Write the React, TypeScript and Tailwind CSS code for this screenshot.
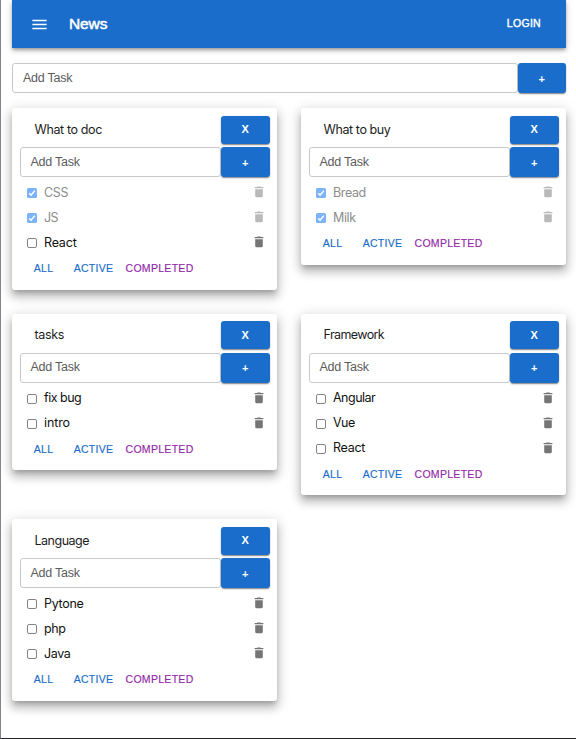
import React from "react";

type Task = { title: string; done?: boolean; w: string };
type List = { title: string; tracking: string; tasks: Task[] };

const lists: List[] = [
  {
    title: "What to doc",
    tracking: "tracking-[-0.38px]",
    tasks: [
      { title: "CSS", done: true, w: "tracking-[-0.3px]" },
      { title: "JS", done: true, w: "tracking-[-0.7px]" },
      { title: "React", w: "tracking-[-0.2px]" },
    ],
  },
  {
    title: "What to buy",
    tracking: "tracking-[-0.4px]",
    tasks: [
      { title: "Bread", done: true, w: "tracking-[-0.4px]" },
      { title: "Milk", done: true, w: "tracking-[-0.35px]" },
    ],
  },
  {
    title: "tasks",
    tracking: "tracking-[-0.35px]",
    tasks: [
      { title: "fix bug", w: "tracking-[-0.5px]" },
      { title: "intro", w: "tracking-[-0.1px]" },
    ],
  },
  {
    title: "Framework",
    tracking: "tracking-[-0.6px]",
    tasks: [
      { title: "Angular", w: "tracking-[-0.5px]" },
      { title: "Vue", w: "tracking-[-0.5px]" },
      { title: "React", w: "tracking-[-0.3px]" },
    ],
  },
  {
    title: "Language",
    tracking: "tracking-[-0.5px]",
    tasks: [
      { title: "Pytone", w: "tracking-[-0.3px]" },
      { title: "php", w: "tracking-[-0.4px]" },
      { title: "Java", w: "tracking-[-0.4px]" },
    ],
  },
];

const raised =
  "bg-[#1a6dca] rounded-[3px] text-white font-bold shadow-[0_2px_1px_-1px_rgba(0,0,0,0.25),0_1px_2px_rgba(0,0,0,0.3)] flex items-center justify-center w-[48.5px] shrink-0";

function AddRow() {
  return (
    <div className="flex h-[30px]">
      <div className="flex min-w-0 flex-1 items-center rounded-[3px] border border-[#c9c9c9] pl-[10px] text-[12.5px] tracking-[-0.25px] text-[#5c5c5c]">
        Add Task
      </div>
      <button className={raised + " pt-[2px] text-[11px]"}>+</button>
    </div>
  );
}

function Checkbox({ checked }: { checked?: boolean }) {
  return (
    <svg width="10" height="10" viewBox="0 0 10 10" className="block shrink-0">
      {checked ? (
        <>
          <rect width="10" height="10" rx="1.5" fill="#7cb3fb" />
          <path d="M2.2 5.3 4.1 7.2 7.8 2.6" fill="none" stroke="#fff" strokeWidth="1.5" />
        </>
      ) : (
        <rect x=".5" y=".5" width="9" height="9" rx="1.5" fill="#fff" stroke="#838383" />
      )}
    </svg>
  );
}

function Trash() {
  return (
    <svg width="14" height="14" viewBox="0 0 24 24" fill="#757575" className="mb-[1.5px] block shrink-0">
      <path d="M5.500 19c0 1.1.9 2 2 2h9c1.100 0 2-.9 2-2V7.200h-13V19zM19.500 3.500h-4l-1-1h-5l-1 1h-4v2.200h15z" />
    </svg>
  );
}

function Card({ list }: { list: List }) {
  return (
    <section className="rounded-[3px] bg-white px-[7.5px] pt-[7.5px] pb-[8px] shadow-[0_4px_5px_-2px_rgba(0,0,0,0.22),0_7px_9px_1px_rgba(0,0,0,0.15),0_3px_13px_2px_rgba(0,0,0,0.14)]">
      <div className="flex h-[31.500px] items-start justify-between">
        <h3 className={"pl-[15px] font-['Inter',sans-serif] text-[12.5px] leading-[28px] text-[#1d1d1d] " + list.tracking}>
          {list.title}
        </h3>
        <button className={raised + " h-[28px] text-[11px]"}>X</button>
      </div>
      <AddRow />
      <ul className="pt-[3.500px]">
        {list.tasks.map((t) => (
          <li key={t.title} className="flex h-[25px] items-center pr-[3.500px] pl-[7.5px]">
            <Checkbox checked={t.done} />
            <span
              className={
                "ml-[7px] flex-1 font-['Inter',sans-serif] text-[12.5px] " + (t.done ? "text-[#8c8c8c] " : "text-[#111] ") + t.w
              }
            >
              {t.title}
            </span>
            <span className={t.done ? "opacity-50" : ""}>
              <Trash />
            </span>
          </li>
        ))}
      </ul>
      <div className="flex h-[26px] items-center pt-[1.5px] text-[10.5px] tracking-[0.3px] text-[#1a6dca] [-webkit-text-stroke:0.15px]">
        <button className="w-[48px]">ALL</button>
        <button className="w-[52px]">ACTIVE</button>
        <button className="ml-[6px] text-[#9227a7]">COMPLETED</button>
      </div>
    </section>
  );
}

export default function App() {
  return (
    <div className="h-[739px] overflow-hidden border-b border-l border-b-[#242424] border-l-[#85818d] bg-white pr-[10px] pl-[11px] font-['Liberation_Sans',Arial,sans-serif]">
      <header className="flex h-12 items-center bg-[#1a6dca] pr-[25px] pl-[18px] text-white shadow-[0_2px_3px_-1px_rgba(0,0,0,0.25),0_3px_4px_rgba(0,0,0,0.16),0_1px_8px_rgba(0,0,0,0.14)]">
        <svg width="19" height="19" viewBox="0 0 24 24" fill="currentColor">
          <path d="M3 18h18v-2H3v2zm0-5h18v-2H3v2zm0-7v2h18V6H3z" />
        </svg>
        <h1 className="ml-[20px] flex-1 text-[15.5px] tracking-[-0.1px] [-webkit-text-stroke:0.5px]">News</h1>
        <button className="text-[10.5px] tracking-[0.3px] [-webkit-text-stroke:0.4px]">LOGIN</button>
      </header>
      <div className="pt-[15px]">
        <AddRow />
      </div>
      <main className="grid grid-cols-2 items-start gap-6 pt-[15px]">
        {lists.map((l) => (
          <Card key={l.title} list={l} />
        ))}
      </main>
    </div>
  );
}
